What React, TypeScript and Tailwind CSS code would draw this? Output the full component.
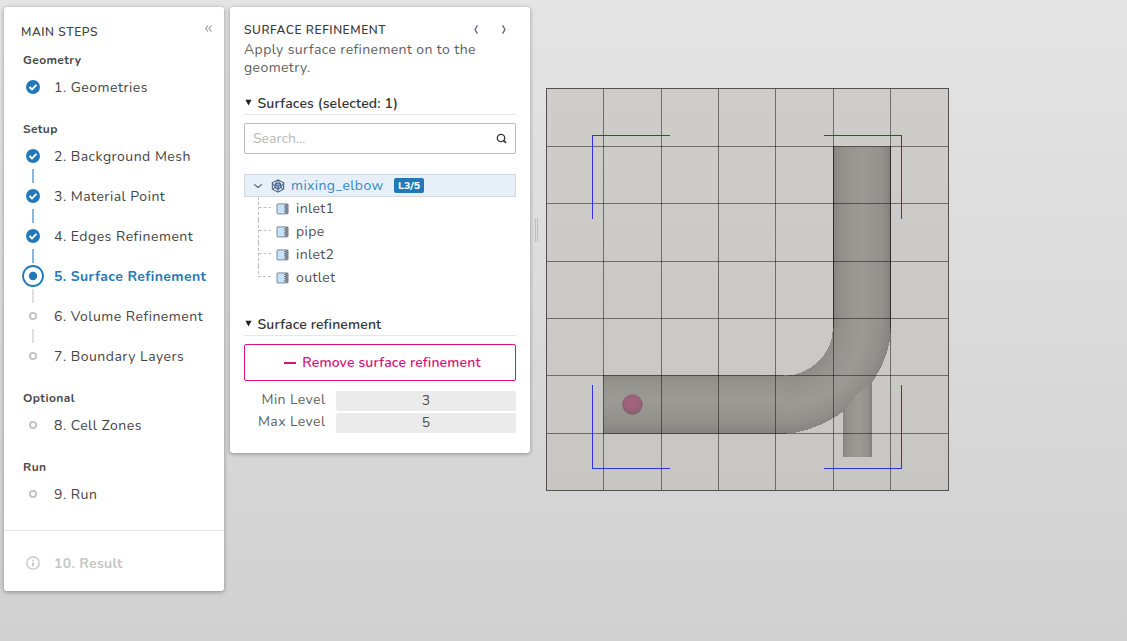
import { Fragment } from "react";

type StepState = "done" | "active" | "todo";
interface Step {
  label: string;
  state: StepState;
}
interface StepGroup {
  title: string;
  steps: Step[];
}

const groups: StepGroup[] = [
  { title: "Geometry", steps: [{ label: "1. Geometries", state: "done" }] },
  {
    title: "Setup",
    steps: [
      { label: "2. Background Mesh", state: "done" },
      { label: "3. Material Point", state: "done" },
      { label: "4. Edges Refinement", state: "done" },
      { label: "5. Surface Refinement", state: "active" },
      { label: "6. Volume Refinement", state: "todo" },
      { label: "7. Boundary Layers", state: "todo" },
    ],
  },
  { title: "Optional", steps: [{ label: "8. Cell Zones", state: "todo" }] },
  { title: "Run", steps: [{ label: "9. Run", state: "todo" }] },
];

function StepIcon({ state }: { state: StepState }) {
  return (
    <svg className="size-[22px] shrink-0" viewBox="0 0 22 22" fill="none">
      {state === "done" && (
        <>
          <circle cx="11" cy="11" r="7" fill="#2279b9" />
          <path d="M7.5 11l2.5 2.4 4.5-4.5" stroke="#fff" strokeWidth="1.9" />
        </>
      )}
      {state === "active" && (
        <>
          <circle cx="11" cy="11" r="10" stroke="#2279b9" strokeWidth="1.8" />
          <circle cx="11" cy="11" r="4.2" fill="#2279b9" />
        </>
      )}
      {state === "todo" && <circle cx="11" cy="11" r="3.1" stroke="#c2c2c2" strokeWidth="1.9" />}
    </svg>
  );
}

function StepsPanel() {
  return (
    <nav className="flex h-[584px] w-[220px] shrink-0 flex-col rounded-[3px] bg-white shadow-[0_1px_4px_rgba(0,0,0,0.35)]">
      <div className="flex h-[46px] items-start justify-between pt-[17px] pr-[12px] pl-[17px]">
        <h1 className="text-xs leading-4 font-semibold tracking-[0.58px] text-[#444]">MAIN STEPS</h1>
        <svg className="mt-[1px] h-[7px] w-[7px]" viewBox="0 0 7 7" fill="none" stroke="#777" strokeWidth="0.9">
          <path d="M3.2.4Q1.9.8 1.7 2.2T.4 3.5q1.1 0 1.3 1.3t1.5 1.8M6.5.4Q5.2.8 5 2.2T3.7 3.5q1.1 0 1.3 1.3t1.5 1.8" />
        </svg>
      </div>
      <div className="flex flex-col gap-[22px]">
        {groups.map((group) => (
          <section key={group.title} className="flex flex-col gap-[7px] pl-[18px]">
            <h2 className="h-3.5 pl-[1px] text-xs leading-[14px] font-bold tracking-[0.4px] text-[#4a4a4a]">{group.title}</h2>
            <div className="flex flex-col">
              {group.steps.map((step, i) => (
                <Fragment key={step.label}>
                  {i > 0 && (
                    <div
                      className={
                        step.state === "todo"
                          ? "ml-[10px] h-3.5 w-[2px] bg-[#dedede]"
                          : "ml-[10px] h-3.5 w-[2px] bg-[#88b7da]"
                      }
                    />
                  )}
                  <div className="flex h-[26px] items-center gap-[10px]">
                    <StepIcon state={step.state} />
                    <span
                      className={`pt-px text-sm whitespace-nowrap ${
                        step.state === "active"
                          ? "font-bold tracking-[0.4px] text-[#2279b9]"
                          : "tracking-[0.5px] text-[#444]"
                      }`}
                    >
                      {step.label}
                    </span>
                  </div>
                </Fragment>
              ))}
            </div>
          </section>
        ))}
      </div>
      <div className="mt-[23px] flex flex-1 items-center gap-[10px] border-t border-[#e4e4e4] pt-[4px] pl-[18px]">
        <svg className="size-[22px]" viewBox="0 0 22 22" fill="none" stroke="#c2c2c2" strokeWidth="1.3">
          <circle cx="11" cy="11" r="6.2" />
          <path d="M11 10.2v4M11 7.8v1.3" strokeWidth="1.7" />
        </svg>
        <span className="pt-[2px] text-sm font-bold tracking-[0.3px] text-[#c6c6c6]">10. Result</span>
      </div>
    </nav>
  );
}

function SectionTitle({ children, spacing }: { children: string; spacing: string }) {
  return (
    <div className="flex h-[22px] items-center gap-[5.5px] border-b border-[#e6e6e6]">
      <svg className="ml-[1px] size-[7px] -translate-y-[1px]" viewBox="0 0 7 7">
        <path d="M.4.7h6.2L3.5 6.5z" fill="#222" />
      </svg>
      <h2 className={`text-sm leading-5 font-semibold text-[#333] ${spacing}`}>{children}</h2>
    </div>
  );
}

function FaceIcon() {
  return (
    <svg className="h-[12px] w-[13px]" viewBox="0 0 13 12" fill="none">
      <rect x="1" y=".9" width="11" height="10" rx=".8" fill="#c5e2fb" stroke="#7d8894" strokeWidth="1" />
      <path d="M8.5 1.4v9h3.2v-9z" fill="#a9b2bb" />
      <path d="M9.1 2v8.5M11.6 1.4v9" stroke="#3a424b" strokeWidth=".9" strokeDasharray="1 1" />
      <path d="M10.3 1.2v9.4" stroke="#3a424b" strokeWidth=".9" strokeDasharray="1 1" />
    </svg>
  );
}

function CubeIcon() {
  return (
    <svg className="h-[14px] w-[14px]" viewBox="0 0 14 14" fill="none" stroke="#34495e" strokeWidth=".9">
      <path d="M7 .9l5.7 2.8v6.5L7 13.1l-5.7-2.9V3.7z" fill="#d5e6f6" />
      <path d="M7 3.9l2.9 1.5v3.2L7 10.2 4.1 8.6V5.4z" fill="#8ab8ee" />
      <path d="M4.1 5.4L7 7l2.9-1.6M7 7v3.2" strokeWidth=".7" />
      <path d="M7 .9L4.1 5.4M7 .9l2.9 4.5M1.3 10.2l2.8-1.6M12.7 10.2L9.9 8.6M1.3 3.7l2.8 4.9M12.7 3.7L9.9 8.6M7 10.2v2.9" strokeWidth=".7" />
    </svg>
  );
}

const faces = ["inlet1", "pipe", "inlet2", "outlet"];

function SurfaceTree() {
  return (
    <div className="mt-[20px] flex flex-col">
      <div className="flex h-[23px] items-center border border-[#d6dade] bg-[#e7f0f8] pl-[8px]">
        <svg className="h-[10px] w-[10px]" viewBox="0 0 10 10" fill="none" stroke="#4c5560" strokeWidth="1.1">
          <path d="M1.2 3.3L5 6.5l3.8-3.2" />
        </svg>
        <span className="ml-[8px]">
          <CubeIcon />
        </span>
        <span className="ml-[6px] w-[93px] pt-px text-sm tracking-[0.4px] whitespace-nowrap text-[#3687c4]">mixing_elbow</span>
        <span className="ml-[10px] flex h-[15px] w-[30px] items-center justify-center rounded-[2px] bg-[#2279b9] pt-px text-[10.5px] font-extrabold text-white">
          L3/5
        </span>
      </div>
      {faces.map((face, i) => (
        <div key={face} className="flex h-[23px] items-center pl-[14px]">
          <svg className="h-[23px] w-[14px]" viewBox="0 0 14 23" fill="none" stroke="#bdbdbd" strokeDasharray="3 2">
            <path d={i === faces.length - 1 ? "M.5 0v10.5H13" : "M.5 0v23M.5 10.5H13"} />
          </svg>
          <span className="ml-[4px]">
            <FaceIcon />
          </span>
          <span className="ml-[7px] pt-px text-sm tracking-[0.4px] text-[#505050]">{face}</span>
        </div>
      ))}
    </div>
  );
}

function LevelRow({ label, value }: { label: string; value: string }) {
  return (
    <div className="flex h-5 items-center gap-[10.5px]">
      <span className="w-[81.5px] -translate-y-[1px] text-right text-sm tracking-[0.4px] whitespace-nowrap text-[#606060]">
        {label}
      </span>
      <span className="flex h-5 flex-1 items-center justify-center rounded-[2px] bg-[#ebebeb] text-sm text-[#505050]">
        {value}
      </span>
    </div>
  );
}

function DetailPanel() {
  return (
    <aside className="flex h-[446px] w-[300px] shrink-0 flex-col rounded-[3px] bg-white px-[14px] pt-[14px] shadow-[0_1px_4px_rgba(0,0,0,0.35)]">
      <header className="flex h-[18px] items-center justify-between pr-[9px]">
        <h1 className="text-xs leading-4 font-semibold tracking-[0.56px] whitespace-nowrap text-[#3c3c3c]">SURFACE REFINEMENT</h1>
        <div className="flex -translate-y-[1px] gap-[22px]">
          <svg className="h-[9px] w-[6px]" viewBox="0 0 6 9" fill="none" stroke="#55586f" strokeWidth="1.2">
            <path d="M4.4.4L2 4.5l2.4 4.1" />
          </svg>
          <svg className="h-[9px] w-[6px]" viewBox="0 0 6 9" fill="none" stroke="#55586f" strokeWidth="1.2">
            <path d="M1.6.4L4 4.5 1.6 8.6" />
          </svg>
        </div>
      </header>
      <p className="mt-[2px] text-sm leading-[18px] tracking-[0.4px] whitespace-nowrap text-[#606060]">
        Apply surface refinement on to the
        <br />
        geometry.
      </p>
      <div className="mt-[16px]">
        <SectionTitle spacing="tracking-[0.15px]">Surfaces (selected: 1)</SectionTitle>
      </div>
      <div className="mt-[8px] flex h-[31px] items-center justify-between rounded-[2px] border border-[#bcbcbc] pr-[8.5px] pl-[8px]">
        <span className="text-sm text-[#b8b8b8]">Search...</span>
        <svg className="size-[11px]" viewBox="0 0 11 11" fill="none" stroke="#333" strokeWidth="1.3">
          <circle cx="5" cy="5" r="3.7" />
          <path d="M7.4 7.4l2.8 2.6" strokeWidth="1.7" />
        </svg>
      </div>
      <SurfaceTree />
      <div className="mt-[25px]">
        <SectionTitle spacing="tracking-[0.13px]">Surface refinement</SectionTitle>
      </div>
      <button className="mt-[8px] flex h-[37px] shrink-0 items-center justify-center gap-[6px] rounded-[2px] border border-[#d6137c] pl-[5px] text-sm font-semibold tracking-[0.15px] whitespace-nowrap text-[#d6137c]">
        <span className="h-[2px] w-[12px] bg-[#d6137c]" />
        <span className="pt-px">Remove surface refinement</span>
      </button>
      <div className="mt-[10px] flex flex-col gap-[2px]">
        <LevelRow label="Min Level" value="3" />
        <LevelRow label="Max Level" value="5" />
      </div>
    </aside>
  );
}

const gridX = [603, 661, 718, 775, 833, 890];
const gridY = [146, 203, 261, 318, 375, 433];

function Viewport() {
  return (
    <svg className="h-[641px] w-[587px] shrink-0" viewBox="540 0 587 641">
      <defs>
        <linearGradient id="vertical" x1="0" x2="1">
          <stop offset="0" stopColor="#858480" />
          <stop offset=".15" stopColor="#92918c" />
          <stop offset=".5" stopColor="#9b9a95" />
          <stop offset=".85" stopColor="#92918c" />
          <stop offset="1" stopColor="#82817d" />
        </linearGradient>
        <linearGradient id="horizontal" x1="0" x2="0" y1="0" y2="1">
          <stop offset="0" stopColor="#8d8c87" />
          <stop offset=".15" stopColor="#94938e" />
          <stop offset=".45" stopColor="#9b9a95" />
          <stop offset=".8" stopColor="#91908b" />
          <stop offset="1" stopColor="#84837f" />
        </linearGradient>
        <radialGradient id="bend" gradientUnits="userSpaceOnUse" cx="784" cy="326" r="107">
          <stop offset=".46" stopColor="#8d8c87" />
          <stop offset=".56" stopColor="#94938e" />
          <stop offset=".74" stopColor="#9b9a95" />
          <stop offset=".9" stopColor="#91908b" />
          <stop offset="1" stopColor="#858480" />
        </radialGradient>
        <linearGradient id="board" x1="0" x2="0" y1="0" y2="1">
          <stop offset="0" stopColor="#cecdc9" />
          <stop offset="1" stopColor="#c7c6c2" />
        </linearGradient>
        <radialGradient id="point" cx=".5" cy=".42" r=".58">
          <stop offset="0" stopColor="#a5647c" />
          <stop offset=".6" stopColor="#9b6278" />
          <stop offset="1" stopColor="#805f6d" />
        </radialGradient>
      </defs>
      <rect x="546" y="88" width="403" height="403" fill="url(#board)" />
      <g shapeRendering="crispEdges">
        <path d="M833 326V328C833 354 810 376 783 376V434C818 433 859 407 875 378C886 360 891 344 891 326Z" fill="url(#bend)" />
        <rect x="833" y="146" width="58" height="181" fill="url(#vertical)" />
        <rect x="603" y="375" width="181" height="59" fill="url(#horizontal)" />
      </g>
      <path d="M843 411Q856 393 872 381V457H843Z" fill="url(#vertical)" />
      <circle cx="632.4" cy="404.5" r="10.2" fill="url(#point)" />
      <g stroke="#000" strokeOpacity=".46" shapeRendering="crispEdges">
        {gridX.map((x) => (
          <path key={x} d={`M${x + 0.5} 89V490`} />
        ))}
        {gridY.map((y) => (
          <path key={y} d={`M547 ${y + 0.5}H948`} />
        ))}
      </g>
      <g fill="none" shapeRendering="crispEdges">
        <path d="M833.5 146V328M890.5 146V327" stroke="#000" strokeOpacity=".35" />
        <rect x="546.5" y="88.5" width="402" height="402" stroke="#505152" />
        <path
          d="M592.5 219V135.5H670M824 135.5H901.5V219M592.5 385V468.5H670M824 468.5H901.5V385"
          stroke="#3330df"
        />
      </g>
    </svg>
  );
}

export default function App() {
  return (
    <main className="flex h-[641px] w-[1127px] items-start overflow-hidden bg-linear-to-b from-[#e4e4e4] to-[#d1d1d1] font-['Nunito','Open_Sans',sans-serif]">
      <div className="flex shrink-0 gap-[6px] pt-[7px] pl-1">
        <StepsPanel />
        <DetailPanel />
      </div>
      <div className="mt-[218px] ml-[5px] flex h-6 w-[5px] shrink-0 gap-[1px]">
        <span className="w-px bg-[#bdbdbd]" />
        <span className="w-px bg-[#bdbdbd]" />
      </div>
      <Viewport />
    </main>
  );
}
